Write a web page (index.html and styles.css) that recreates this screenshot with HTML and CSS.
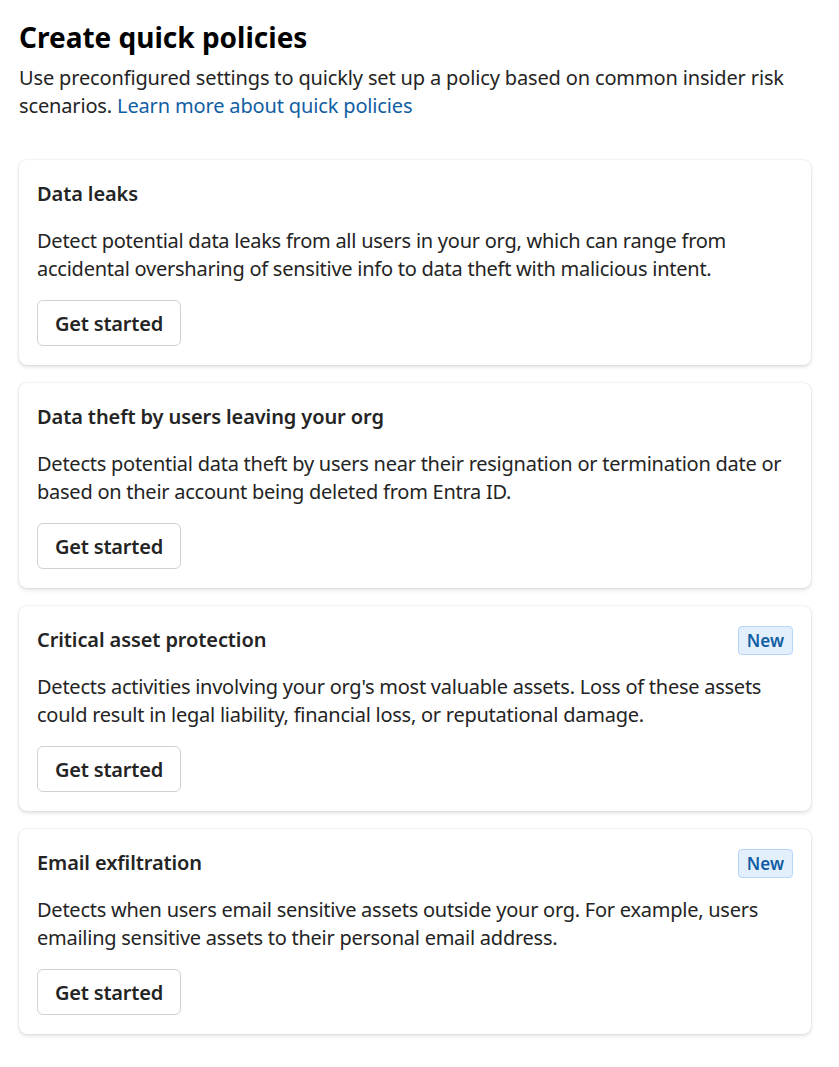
FILE: index.html
```html
<!DOCTYPE html>
<html lang="en">
<head>
<meta charset="utf-8">
<title>Create quick policies</title>
<link rel="stylesheet" href="styles.css">
</head>
<body>
<main class="page">
  <header class="intro">
    <h1 class="title">Create quick policies</h1>
    <p class="lead">Use preconfigured settings to quickly set up a policy based on common insider risk scenarios. <a class="link" href="#">Learn more about quick policies</a></p>
  </header>
  <section class="cards">
    <article class="card">
      <div class="card-head">
        <h2 class="card-title">Data leaks</h2>
      </div>
      <p class="card-text">Detect potential data leaks from all users in your org, which can range from accidental oversharing of sensitive info to data theft with malicious intent.</p>
      <button class="btn" type="button">Get started</button>
    </article>
    <article class="card">
      <div class="card-head">
        <h2 class="card-title">Data theft by users leaving your org</h2>
      </div>
      <p class="card-text">Detects potential data theft by users near their resignation or termination date or based on their account being deleted from Entra ID.</p>
      <button class="btn" type="button">Get started</button>
    </article>
    <article class="card">
      <div class="card-head">
        <h2 class="card-title">Critical asset protection</h2>
        <span class="badge">New</span>
      </div>
      <p class="card-text">Detects activities involving your org's most valuable assets. Loss of these assets could result in legal liability, financial loss, or reputational damage.</p>
      <button class="btn" type="button">Get started</button>
    </article>
    <article class="card">
      <div class="card-head">
        <h2 class="card-title">Email exfiltration</h2>
        <span class="badge">New</span>
      </div>
      <p class="card-text">Detects when users email sensitive assets outside your org. For example, users emailing sensitive assets to their personal email address.</p>
      <button class="btn" type="button">Get started</button>
    </article>
  </section>
</main>
</body>
</html>
```

FILE: styles.css
```css
html, body {
  margin: 0;
  padding: 0;
  background: #ffffff;
}

body {
  font-family: "Noto Sans", "Open Sans", "DejaVu Sans", sans-serif;
  color: #242424;
}

.page {
  padding: 18px 28px 30px 19px;
}

.title {
  margin: 0;
  font-size: 28px;
  line-height: 38px;
  font-weight: 700;
  color: #000000;
}

.lead {
  margin: 8px 0 0 0;
  font-size: 20px;
  line-height: 28px;
  letter-spacing: -0.15px;
  color: #242424;
}

.link {
  color: #115ea3;
  text-decoration: none;
}

.cards {
  margin-top: 40px;
  display: flex;
  flex-direction: column;
  gap: 18px;
}

.card {
  background: #ffffff;
  border-radius: 8px;
  box-shadow: 0 0 2px rgba(0, 0, 0, 0.12), 0 2px 4px rgba(0, 0, 0, 0.12);
  padding: 20px 18px 19px 18px;
  display: flex;
  flex-direction: column;
  align-items: flex-start;
}

.card-head {
  align-self: stretch;
  display: flex;
  align-items: center;
  justify-content: space-between;
  height: 28px;
}

.card-title {
  margin: 0;
  font-size: 20px;
  line-height: 28px;
  font-weight: 600;
  letter-spacing: -0.1px;
  color: #242424;
}

.badge {
  display: inline-flex;
  align-items: center;
  height: 27px;
  padding: 0 8px;
  border: 1px solid #b4d6fa;
  border-radius: 4px;
  background: #e3effb;
  color: #115ea3;
  font-size: 17px;
  font-weight: 600;
}

.card-text {
  margin: 19px 0 0 0;
  font-size: 20px;
  line-height: 28px;
  letter-spacing: -0.25px;
  color: #242424;
}

.btn {
  margin-top: 17px;
  height: 46px;
  padding: 0 17px;
  border: 1px solid #d1d1d1;
  border-radius: 6px;
  background: #ffffff;
  font-family: inherit;
  font-size: 20px;
  font-weight: 600;
  letter-spacing: -0.2px;
  color: #242424;
  cursor: pointer;
}
```
